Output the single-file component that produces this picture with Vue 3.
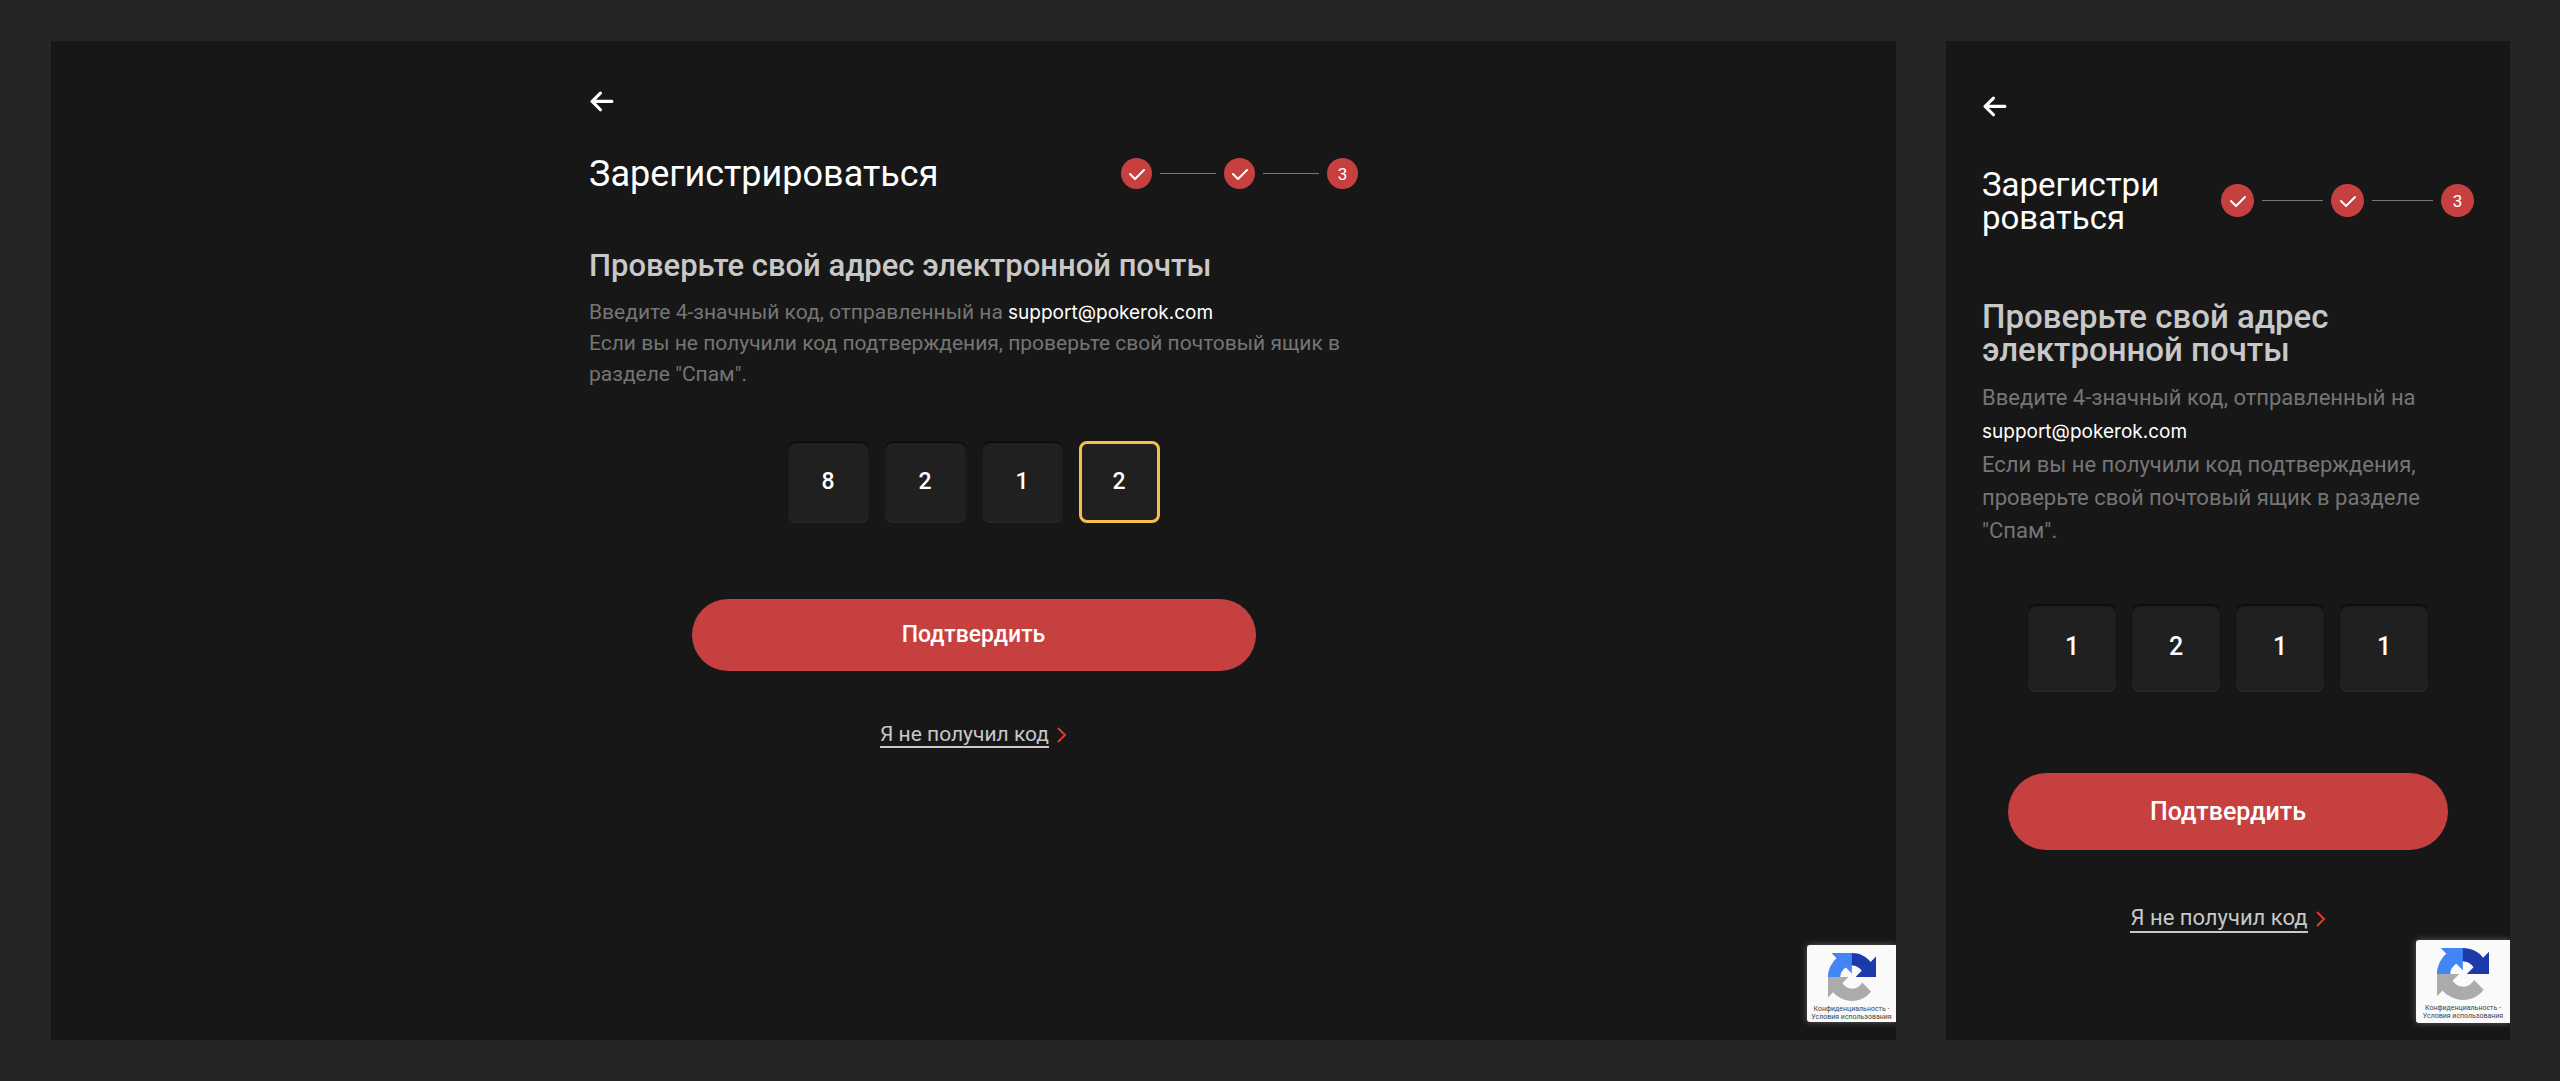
<template>
  <main class="board">
    <section v-for="screen in screens" :key="screen.name" class="screen" :class="screen.name">
      <form class="signup" @submit.prevent>
        <a class="back" href="#" aria-label="Назад">
          <svg viewBox="0 0 24 20" fill="none" stroke="#fff" stroke-width="3" stroke-linecap="round" stroke-linejoin="round">
            <path d="M22 10H3M11 2l-8 8 8 8" />
          </svg>
        </a>

        <header class="top">
          <h1>Зарегистрироваться</h1>
          <ol class="steps">
            <li v-for="step in 3" :key="step">
              <span class="dot">
                <svg v-if="step < 3" viewBox="0 0 16 12" fill="none" stroke="#fff" stroke-width="2" stroke-linecap="round" stroke-linejoin="round">
                  <path d="M1 6l5 5 9-9" />
                </svg>
                <template v-else>{{ step }}</template>
              </span>
            </li>
          </ol>
        </header>

        <h2>Проверьте свой адрес электронной почты</h2>
        <p class="hint">
          Введите 4-значный код, отправленный на <span class="email">{{ email }}</span><br />
          Если вы не получили код подтверждения, проверьте свой почтовый ящик в разделе "Спам".
        </p>

        <div class="code">
          <input
            v-for="(digit, i) in screen.code"
            :key="i"
            v-model="screen.code[i]"
            :class="{ active: screen.active === i }"
            :aria-label="'Цифра ' + (i + 1)"
            type="text"
            inputmode="numeric"
            maxlength="1"
          />
        </div>

        <button class="submit" type="submit">Подтвердить</button>

        <a class="resend" href="#">
          <span>Я не получил код</span>
          <svg viewBox="0 0 10 16" fill="none" stroke="#e03a2e" stroke-width="2">
            <path d="M1 1l7 7-7 7" />
          </svg>
        </a>
      </form>

      <aside class="captcha">
        <svg viewBox="0 0 64 64">
          <path fill="#1c3aa9" d="M64 31.955l-.018-1.373V4.687l-7.16 7.16C50.963 4.674 42.04.093 32.05.093c-10.4 0-19.63 4.96-25.458 12.64l11.736 11.86a15.55 15.55 0 0 1 4.754-5.334c2.05-1.6 4.952-2.906 8.968-2.906.485 0 .86.057 1.135.163 4.976.393 9.288 3.14 11.828 7.124l-8.307 8.307L64 31.953" />
          <path fill="#4285f4" d="M31.862.094l-1.373.018H4.594l7.16 7.16C4.58 13.13 0 22.05 0 32.04c0 10.4 4.96 19.63 12.64 25.458L24.5 45.762a15.55 15.55 0 0 1-5.334-4.754c-1.6-2.05-2.906-4.952-2.906-8.968 0-.485.057-.86.163-1.135.393-4.976 3.14-9.288 7.124-11.828l8.307 8.307L31.86.095" />
          <path fill="#ababab" d="M.001 32.045l.018 1.373v25.895l7.16-7.16c5.873 7.173 14.8 11.754 24.79 11.754 10.4 0 19.63-4.96 25.458-12.64L45.7 39.41a15.55 15.55 0 0 1-4.754 5.334c-2.05 1.6-4.952 2.906-8.968 2.906-.485 0-.86-.057-1.135-.163-4.976-.393-9.288-3.14-11.828-7.124l8.307-8.307c-10.522.04-22.4.066-27.295-.005" />
        </svg>
        <small>Конфиденциальность -<br />Условия использования</small>
      </aside>
    </section>
  </main>
</template>

<script setup>
import { reactive } from 'vue';

const email = 'support@pokerok.com';

const screens = reactive([
  { name: 'desktop', code: ['8', '2', '1', '2'], active: 3 },
  { name: 'mobile', code: ['1', '2', '1', '1'], active: -1 },
]);
</script>

<style>
body {
  margin: 0;
  background: #252525;
}
</style>

<style scoped>
.board {
  display: grid;
  grid-template-columns: minmax(0, 1fr) 564px;
  gap: 50px;
  box-sizing: border-box;
  min-height: 100vh;
  padding: 41px 50px 41px 51px;
  background: #252525;
  font-family: Roboto, 'Liberation Sans', sans-serif;
}
.screen {
  position: relative;
  overflow: hidden;
  background: #171717;
}
.signup {
  display: flex;
  flex-direction: column;
  box-sizing: border-box;
  margin: 0 auto;
}
.back {
  width: 25px;
}
.back svg {
  display: block;
  width: 100%;
}
.top {
  display: flex;
  align-items: center;
  justify-content: space-between;
}
h1,
h2,
p,
ol {
  margin: 0;
  padding: 0;
}
h1 {
  color: #fff;
  font-weight: 400;
  word-break: break-all;
}
h2 {
  color: #c8c8c8;
  font-weight: 500;
}
.steps {
  display: flex;
  flex: none;
  list-style: none;
}
.steps li {
  display: flex;
  align-items: center;
}
.steps li + li::before {
  content: '';
  width: 56px;
  height: 1px;
  margin: 0 8px;
  background: #777;
}
.dot {
  display: flex;
  align-items: center;
  justify-content: center;
  width: 31px;
  height: 31px;
  border-radius: 50%;
  background: #c74040;
  color: #fff;
  font-size: 17px;
}
.dot svg {
  width: 16px;
}
.hint {
  color: #757575;
}
.email {
  color: #fff;
  font-family: Inter, Roboto, sans-serif;
  font-size: 19px;
}
.code {
  display: flex;
  align-self: center;
  gap: 16px;
}
.code input {
  box-sizing: border-box;
  width: 81px;
  height: 82px;
  padding: 0;
  border: 0;
  border-radius: 8px;
  outline: none;
  background: #202020;
  box-shadow: inset 0 2px 1px #0c0c0c, inset 0 -2px 1px #262626;
  color: #fff;
  font: 500 23px Roboto, sans-serif;
  text-align: center;
}
.code input.active {
  border: 3px solid #f3c14b;
  box-shadow: none;
}
.submit {
  align-self: center;
  width: 100%;
  border: 0;
  border-radius: 40px;
  background: #c74040;
  color: #fff;
  font: 500 23px Roboto, sans-serif;
  cursor: pointer;
}
.resend {
  display: flex;
  align-self: center;
  align-items: center;
  gap: 8px;
  color: #c8c8c8;
  text-decoration: none;
}
.resend span {
  border-bottom: 2px solid #c8c8c8;
}
.resend svg {
  width: 10px;
}
.captcha {
  position: absolute;
  right: 0;
  bottom: 18px;
  display: flex;
  flex-direction: column;
  align-items: center;
  box-sizing: border-box;
  width: 89px;
  height: 77px;
  padding-top: 8px;
  border-radius: 3px 0 0 3px;
  background: #fafafa;
  box-shadow: 0 0 6px #606060;
  color: #444;
}
.captcha svg {
  width: 48px;
}
.captcha small {
  margin-top: 4px;
  font-size: 7px;
  line-height: 8px;
  text-align: center;
  white-space: nowrap;
}

/* desktop */
.desktop .signup {
  max-width: 769px;
  padding: 50px 0;
}
.desktop h1 {
  font-size: 36px;
  line-height: 40px;
}
.desktop .top {
  margin-top: 42px;
}
.desktop h2 {
  margin-top: 56px;
  font-size: 31px;
  line-height: 32px;
}
.desktop .hint {
  margin-top: 15px;
  font-size: 21px;
  line-height: 31px;
}
.desktop .code {
  margin-top: 51px;
}
.desktop .submit {
  max-width: 564px;
  height: 72px;
  margin-top: 76px;
}
.desktop .resend {
  margin-top: 51px;
  font-size: 21px;
  line-height: 24px;
}

/* mobile */
.mobile .signup {
  padding: 55px 36px;
}
.mobile h1,
.mobile h2 {
  font-size: 33px;
  line-height: 33px;
}
.mobile h1 {
  width: 190px;
}
.mobile .top {
  margin-top: 51px;
}
.mobile .steps li + li::before {
  width: 61px;
}
.mobile .dot {
  width: 33px;
  height: 33px;
}
.mobile h2 {
  margin-top: 66px;
}
.mobile .hint {
  margin-top: 15px;
  font-size: 22px;
  line-height: 33px;
}
.mobile .code {
  margin-top: 57px;
}
.mobile .code input {
  width: 88px;
  height: 88px;
  padding-bottom: 3px;
  font-size: 25px;
}
.mobile .submit {
  width: 440px;
  height: 77px;
  margin-top: 81px;
  font-size: 25px;
}
.mobile .resend {
  margin-top: 55px;
  font-size: 22px;
  line-height: 26px;
}
.mobile .captcha {
  bottom: 17px;
  width: 94px;
  height: 83px;
}
.mobile .captcha svg {
  width: 52px;
}
</style>
